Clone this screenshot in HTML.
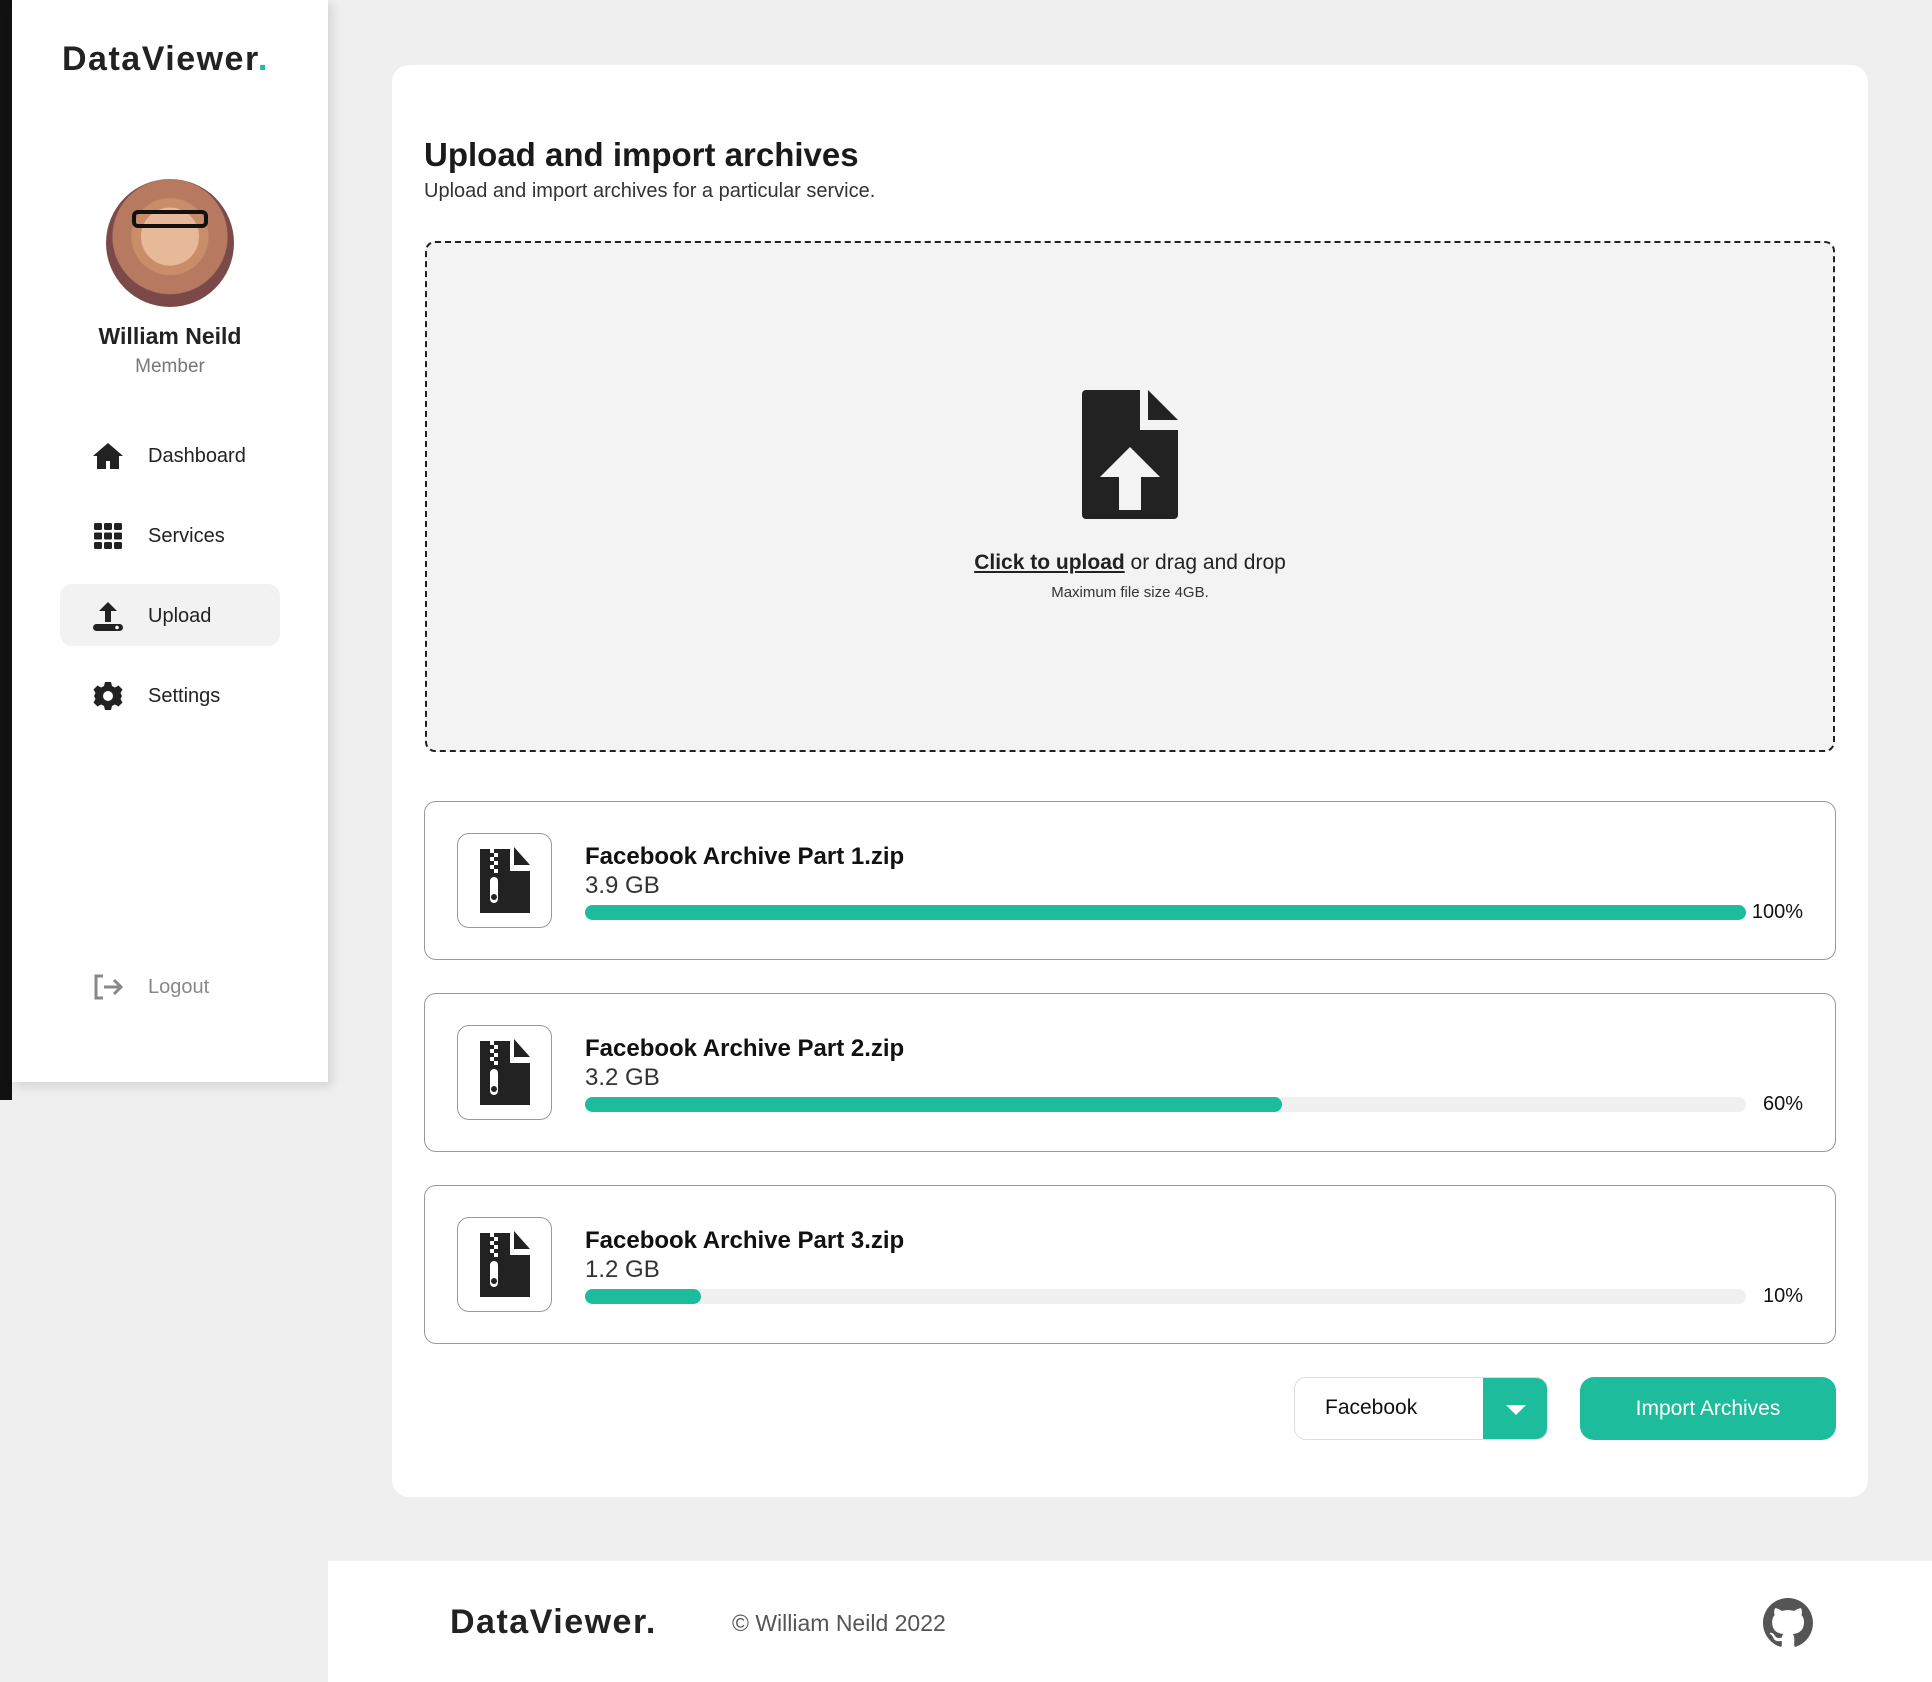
<!DOCTYPE html>
<html><head><meta charset="utf-8"><style>
*{box-sizing:border-box;margin:0;padding:0}
body{width:1932px;height:1682px;background:#efefef;font-family:"Liberation Sans",sans-serif;color:#1a1a1a;position:relative;overflow:hidden}
.abs{position:absolute}
.strip{left:0;top:0;width:12px;height:1100px;background:#111}
.side{left:12px;top:0;width:316px;height:1082px;background:#fff;box-shadow:4px 4px 10px rgba(0,0,0,.12)}
.logo{font-weight:900;letter-spacing:1.5px;color:#222}
.logo b{color:#1dbc9c}
.nav{left:92px;width:220px;height:40px;display:flex;align-items:center;font-size:20px;color:#222}
.nav svg{width:32px;height:32px;margin-right:24px}
.card{left:392px;top:65px;width:1476px;height:1432px;background:#fff;border-radius:17px}
.drop{left:425px;top:241px;width:1410px;height:511px;border:2px dashed #222;border-radius:10px;background:#f3f3f3}
.item{left:424px;width:1412px;height:159px;border:1.5px solid #999;border-radius:12px;background:#fff}
.ibox{position:absolute;left:32px;top:31px;width:95px;height:95px;border:1.5px solid #999;border-radius:12px;display:flex;align-items:center;justify-content:center}
.name{position:absolute;left:160px;top:41px;font-size:24px;font-weight:bold;color:#111}
.size{position:absolute;left:160px;top:70px;font-size:24px;color:#333}
.bar{position:absolute;left:160px;top:103px;width:1161px;height:15px;border-radius:8px;background:#f0f0f0}
.bar div{height:100%;border-radius:8px;background:#1dbc9c}
.pct{position:absolute;right:32px;top:99px;font-size:20px;color:#111}
</style></head><body>
<div class="abs strip"></div>
<div class="abs side">
 <div class="abs logo" style="left:50px;top:40px;font-size:34px">DataViewer<b>.</b></div>
 <div class="abs" style="left:94px;top:179px;width:128px;height:128px;border-radius:50%;background:radial-gradient(circle at 50% 45%,#e8b89a 0 30%,#c98d6a 31% 40%,#b77a60 41% 60%,#7b4a48 61%)"></div>
 <div class="abs" style="left:120px;top:210px;width:76px;height:18px;border:4px solid #111;border-radius:6px"></div>
 <div class="abs" style="left:0;width:316px;top:323px;text-align:center;font-size:23px;font-weight:bold;color:#222">William Neild</div>
 <div class="abs" style="left:0;width:316px;top:356px;text-align:center;font-size:19px;color:#777">Member</div>
 <div class="abs" style="left:48px;top:584px;width:220px;height:62px;border-radius:12px;background:#f2f2f2"></div>
</div>
<div class="abs nav" style="top:436px"><svg viewBox="0 0 32 32"><path d="M16 3L1 16h4v13h9v-8h4v8h9V16h4z" fill="#222"/></svg>Dashboard</div>
<div class="abs nav" style="top:516px"><svg viewBox="0 0 32 32" fill="#222"><rect x="2" y="3" width="8" height="7" rx="1.5"/><rect x="12" y="3" width="8" height="7" rx="1.5"/><rect x="22" y="3" width="8" height="7" rx="1.5"/><rect x="2" y="12.5" width="8" height="7" rx="1.5"/><rect x="12" y="12.5" width="8" height="7" rx="1.5"/><rect x="22" y="12.5" width="8" height="7" rx="1.5"/><rect x="2" y="22" width="8" height="7" rx="1.5"/><rect x="12" y="22" width="8" height="7" rx="1.5"/><rect x="22" y="22" width="8" height="7" rx="1.5"/></svg>Services</div>
<div class="abs nav" style="top:596px"><svg viewBox="0 0 32 32" fill="#222"><path d="M16 2l-9 9h6v11h6V11h6z"/><rect x="1" y="24" width="30" height="7" rx="3.5"/><circle cx="25" cy="27.5" r="1.8" fill="#fff"/></svg>Upload</div>
<div class="abs nav" style="top:676px"><svg viewBox="0 0 32 32"><path d="M13 2h6l1 4 3 1.5 3.5-2 4 4-2 3.5L30 16l-1.5 3 2 3.5-4 4-3.5-2L20 26l-1 4h-6l-1-4-3-1.5-3.5 2-4-4 2-3.5L2 16l1.5-3-2-3.5 4-4 3.5 2L12 6z" fill="#222"/><circle cx="16" cy="16" r="5" fill="#fff"/></svg>Settings</div>
<div class="abs nav" style="top:967px;color:#888"><svg viewBox="0 0 32 32" fill="none" stroke="#888" stroke-width="3"><path d="M11 5H4v22h7"/><path d="M12 16h17M22 9l7 7-7 7"/></svg>Logout</div>

<div class="abs card"></div>
<div class="abs" style="left:424px;top:136px;font-size:33px;font-weight:bold;color:#1a1a1a">Upload and import archives</div>
<div class="abs" style="left:424px;top:180px;font-size:20px;color:#333">Upload and import archives for a particular service.</div>
<div class="abs drop"></div>
<svg class="abs" style="left:1082px;top:390px" width="96" height="129" viewBox="0 0 96 129"><path d="M0 4a4 4 0 0 1 4-4h54v40h38v85a4 4 0 0 1-4 4H4a4 4 0 0 1-4-4z" fill="#222"/><path d="M66 0l30 30H66z" fill="#222"/><path d="M48 57L18 87h19v33h22V87h19z" fill="#f3f3f3"/></svg>
<div class="abs" style="left:425px;width:1410px;top:551px;text-align:center;font-size:21px;color:#222"><span style="font-weight:bold;text-decoration:underline">Click to upload</span> or drag and drop</div>
<div class="abs" style="left:425px;width:1410px;top:584px;text-align:center;font-size:15px;color:#333">Maximum file size 4GB.</div>

<div class="abs item" style="top:801px"><div class="ibox"><svg width="50" height="68" viewBox="0 0 50 68"><path d="M0 2h30v22h20v42H0z" fill="#222"/><path d="M34 0l16 18H34z" fill="#222"/><g fill="#fff"><rect x="10" y="2" width="4" height="4"/><rect x="14" y="6" width="4" height="4"/><rect x="10" y="10" width="4" height="4"/><rect x="14" y="14" width="4" height="4"/><rect x="10" y="18" width="4" height="4"/><rect x="14" y="22" width="4" height="4"/><rect x="10" y="30" width="8" height="26" rx="4"/></g><circle cx="14" cy="50" r="3" fill="#222"/></svg></div><div class="name">Facebook Archive Part 1.zip</div><div class="size">3.9 GB</div><div class="bar"><div style="width:100%"></div></div><div class="pct">100%</div></div>
<div class="abs item" style="top:993px"><div class="ibox"><svg width="50" height="68" viewBox="0 0 50 68"><path d="M0 2h30v22h20v42H0z" fill="#222"/><path d="M34 0l16 18H34z" fill="#222"/><g fill="#fff"><rect x="10" y="2" width="4" height="4"/><rect x="14" y="6" width="4" height="4"/><rect x="10" y="10" width="4" height="4"/><rect x="14" y="14" width="4" height="4"/><rect x="10" y="18" width="4" height="4"/><rect x="14" y="22" width="4" height="4"/><rect x="10" y="30" width="8" height="26" rx="4"/></g><circle cx="14" cy="50" r="3" fill="#222"/></svg></div><div class="name">Facebook Archive Part 2.zip</div><div class="size">3.2 GB</div><div class="bar"><div style="width:60%"></div></div><div class="pct">60%</div></div>
<div class="abs item" style="top:1185px"><div class="ibox"><svg width="50" height="68" viewBox="0 0 50 68"><path d="M0 2h30v22h20v42H0z" fill="#222"/><path d="M34 0l16 18H34z" fill="#222"/><g fill="#fff"><rect x="10" y="2" width="4" height="4"/><rect x="14" y="6" width="4" height="4"/><rect x="10" y="10" width="4" height="4"/><rect x="14" y="14" width="4" height="4"/><rect x="10" y="18" width="4" height="4"/><rect x="14" y="22" width="4" height="4"/><rect x="10" y="30" width="8" height="26" rx="4"/></g><circle cx="14" cy="50" r="3" fill="#222"/></svg></div><div class="name">Facebook Archive Part 3.zip</div><div class="size">1.2 GB</div><div class="bar"><div style="width:10%"></div></div><div class="pct">10%</div></div>

<div class="abs" style="left:1294px;top:1377px;width:254px;height:63px;border:1.5px solid #ddd;border-radius:12px;overflow:hidden;background:#fff">
 <div class="abs" style="left:30px;top:18px;font-size:21px;color:#111">Facebook</div>
 <div class="abs" style="left:188px;top:0;width:66px;height:63px;background:#1dbc9c"></div>
 <svg class="abs" style="left:210px;top:26px" width="22" height="12" viewBox="0 0 22 12"><path d="M1 1h20l-10 10z" fill="#fff"/></svg>
</div>
<div class="abs" style="left:1580px;top:1377px;width:256px;height:63px;border-radius:14px;background:#1dbc9c;color:#fff;font-size:21px;text-align:center;line-height:63px">Import Archives</div>

<div class="abs" style="left:328px;top:1561px;width:1604px;height:121px;background:#fff"></div>
<div class="abs logo" style="left:450px;top:1603px;font-size:34px">DataViewer<b style="color:#222">.</b></div>
<div class="abs" style="left:732px;top:1610px;font-size:23px;color:#555">© William Neild 2022</div>
<svg class="abs" style="left:1763px;top:1598px" width="50" height="50" viewBox="0 0 16 16"><path fill="#555" d="M8 0C3.580 0 0 3.58 0 8c0 3.540 2.290 6.53 5.470 7.59.4.07.55-.17.55-.38 0-.19-.01-.82-.01-1.49-2.010.37-2.53-.49-2.69-.94-.09-.23-.48-.94-.82-1.13-.28-.15-.68-.52-.01-.53.63-.01 1.080.58 1.230.82.72 1.210 1.870.87 2.330.66.07-.52.28-.87.51-1.07-1.78-.2-3.64-.89-3.64-3.950 0-.87.31-1.590.82-2.150-.08-.2-.36-1.020.08-2.120 0 0 .67-.21 2.200.82.64-.18 1.320-.27 2-.27.68 0 1.360.09 2 .27 1.530-1.040 2.200-.82 2.200-.82.44 1.100.16 1.920.08 2.120.51.56.82 1.270.82 2.150 0 3.070-1.870 3.750-3.650 3.950.29.25.54.73.54 1.480 0 1.070-.01 1.930-.01 2.200 0 .21.15.46.55.38A8.013 8.013 0 0016 8c0-4.420-3.580-8-8-8z"/></svg>
</body></html>
